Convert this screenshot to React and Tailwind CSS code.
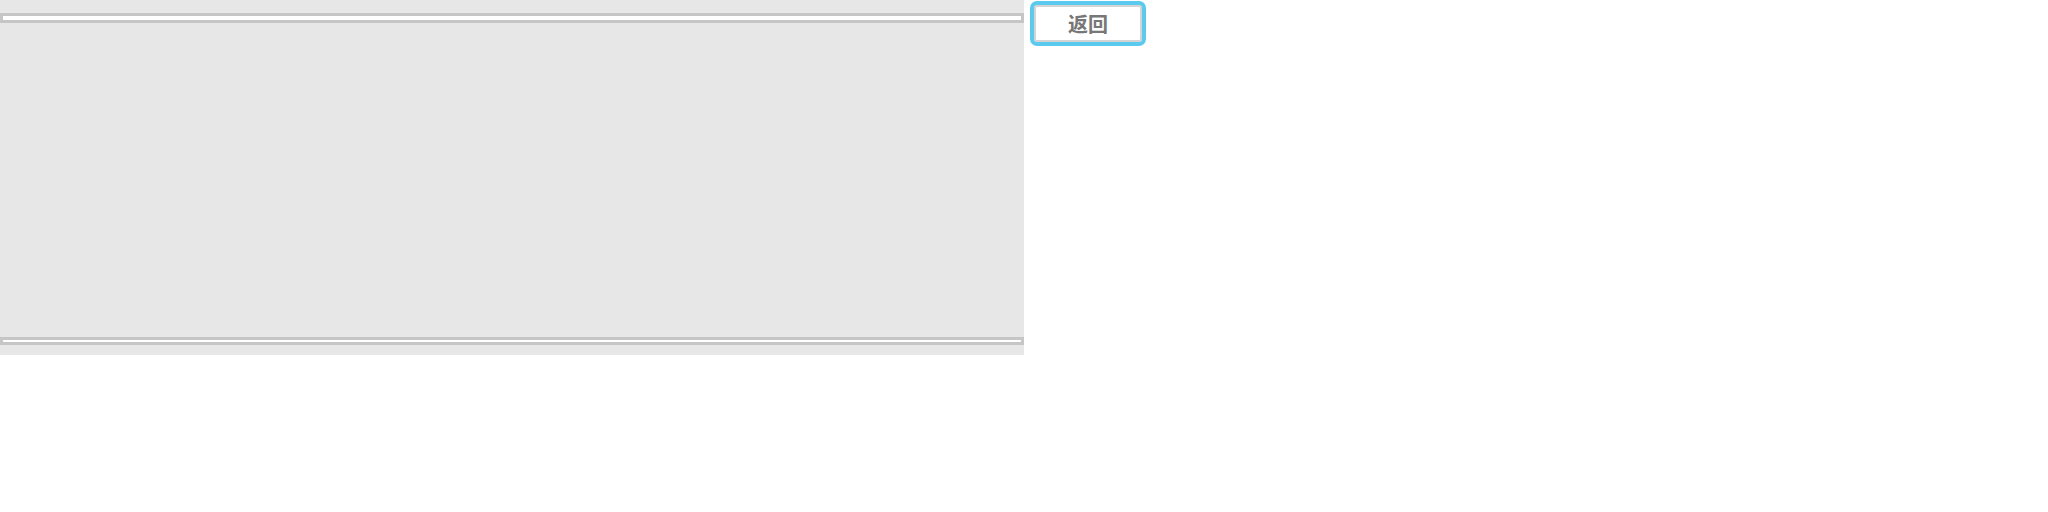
export default function App() {
    return (
        <div className="flex items-start w-[2048px] h-[512px] bg-white" style={{ fontFamily: '"Noto Sans CJK SC", "Noto Sans", sans-serif' }}>
            <div className="flex flex-col w-[1024px] h-[355px] bg-[#e7e7e7]">
                <div className="mt-[13px] h-[10px] border-[3px] border-[#c6c6c6] bg-white" />
                <div className="flex-1" />
                <div className="mb-[10px] h-[8px] border-[3px] border-[#c6c6c6] bg-white" />
            </div>
            <button className="ml-[6px] mt-[1px] w-[116px] h-[45px] flex items-center justify-center rounded-[7px] border-4 border-[#5ccaee] bg-white shadow-[inset_0_0_0_2px_#d4d4d4] text-[20px] font-bold text-[#777777] leading-none">
                返回
            </button>
        </div>
    );
}
